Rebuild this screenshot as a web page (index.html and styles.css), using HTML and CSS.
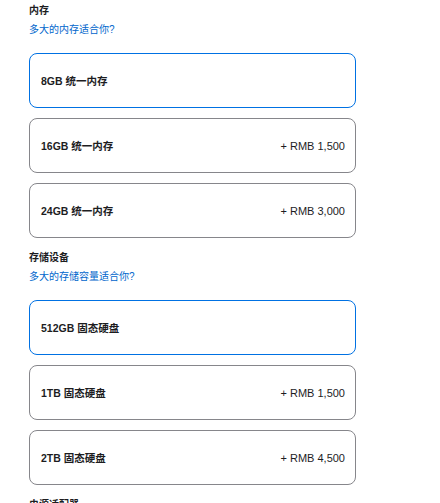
FILE: index.html
```html
<!DOCTYPE html>
<html lang="zh-CN">
<head>
<meta charset="utf-8">
<link rel="stylesheet" href="styles.css">
</head>
<body>
<div class="page">
  <section class="group">
    <h3 class="group-title">内存</h3>
    <a class="group-link" href="#">多大的内存适合你?</a>
    <div class="options">
      <div class="option selected"><span class="label">8GB 统一内存</span></div>
      <div class="option"><span class="label">16GB 统一内存</span><span class="price">+ RMB 1,500</span></div>
      <div class="option"><span class="label">24GB 统一内存</span><span class="price">+ RMB 3,000</span></div>
    </div>
  </section>
  <section class="group">
    <h3 class="group-title">存储设备</h3>
    <a class="group-link" href="#">多大的存储容量适合你?</a>
    <div class="options">
      <div class="option selected"><span class="label">512GB 固态硬盘</span></div>
      <div class="option"><span class="label">1TB 固态硬盘</span><span class="price">+ RMB 1,500</span></div>
      <div class="option"><span class="label">2TB 固态硬盘</span><span class="price">+ RMB 4,500</span></div>
    </div>
  </section>
  <section class="group">
    <h3 class="group-title">电源适配器</h3>
  </section>
</div>
</body>
</html>
```

FILE: styles.css
```css
html, body {
  margin: 0;
  padding: 0;
  background: #ffffff;
}
body {
  font-family: "Liberation Sans", "Noto Sans CJK SC", sans-serif;
  color: #1d1d1f;
}
.page {
  width: 327px;
  padding: 4px 0 0 29px;
  display: flex;
  flex-direction: column;
  gap: 13px;
}
.group {
  display: flex;
  flex-direction: column;
}
.group-title {
  margin: 0;
  font-size: 10px;
  line-height: 14px;
  font-weight: 700;
  color: #1d1d1f;
}
.group-link {
  margin-top: 5px;
  font-size: 10px;
  line-height: 14px;
  color: #0066cc;
  text-decoration: none;
}
.options {
  margin-top: 16px;
  display: flex;
  flex-direction: column;
  gap: 10px;
}
.option {
  box-sizing: border-box;
  height: 55px;
  border: 1px solid #86868b;
  border-radius: 8px;
  padding: 0 10px 0 11px;
  display: flex;
  align-items: center;
  justify-content: space-between;
  font-size: 10.5px;
}
.option.selected {
  border-color: #0071e3;
}
.label {
  font-weight: 700;
  color: #1d1d1f;
}
.price {
  font-size: 11px;
  color: #1d1d1f;
}
```
